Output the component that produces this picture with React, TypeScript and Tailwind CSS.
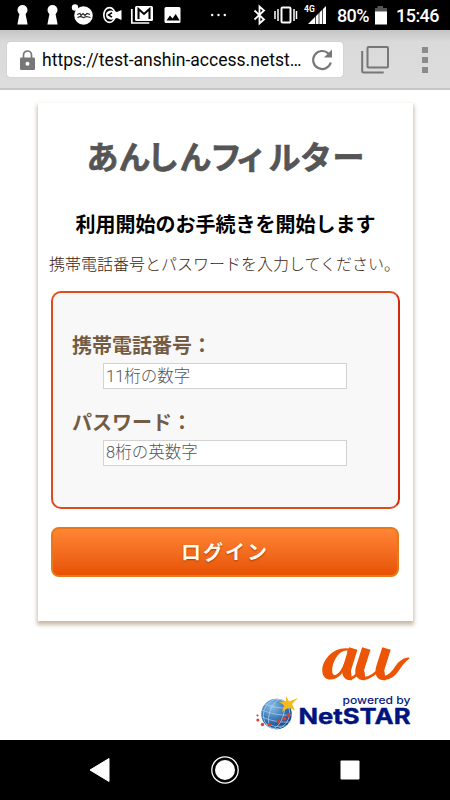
import React from "react";

const jp = "font-['Noto_Sans_CJK_JP',sans-serif]";

function StatusIcons() {
  return (
    <svg width="450" height="30" viewBox="0 0 450 30" fill="#fff">
      <g id="keyhole">
        <circle cx="22.5" cy="10" r="5" />
        <path d="M20 11h5l2.6 13.5H17.4z" />
      </g>
      <use href="#keyhole" x="30" />
      <circle cx="75" cy="7.500" r="3.200" />
      <circle cx="83.500" cy="15.500" r="9.300" />
      <path d="M77 14.500l3-1 1 2 2-2 2 2 2-2 3 1M77.500 17.500l3-1 3 1 3-1 4 1" fill="none" stroke="#222" strokeWidth="1.200" />
      <ellipse cx="109.500" cy="15" rx="5.700" ry="7.400" fill="none" stroke="#fff" strokeWidth="1.600" />
      <path d="M106 15q0-4.500 5.500-4.500l5.500 1.500 4.500-2v10l-4.500-2-5.500 1.700Q106 19.500 106 15z" />
      <path d="M112 12.700l-3.500 2.300 3.500 2.200" fill="none" stroke="#000" strokeWidth="1.500" />
      <path d="M131.800 9v14h17.500" fill="none" stroke="#fff" strokeWidth="1.700" />
      <rect x="135" y="6" width="18" height="15" rx="1.500" />
      <path d="M138.500 19V9l5.500 5 5.500-5v10" fill="none" stroke="#000" strokeWidth="2" />
      <rect x="164.500" y="7" width="16" height="16" rx="1.500" />
      <path d="M166.500 20.500l3.500-5 2.500 3 3.200-4.500 4 6.500z" fill="#000" />
      <circle cx="212.200" cy="15" r="1.200" /><circle cx="218.500" cy="15" r="1.200" /><circle cx="224.800" cy="15" r="1.200" />
      <path d="M254.500 10.500l9.500 9-4.500 4V6.500l4.500 4-9.500 9" fill="none" stroke="#fff" strokeWidth="1.800" />
      <rect x="281.500" y="7.500" width="9" height="15" rx="1" fill="none" stroke="#fff" strokeWidth="2" />
      <path d="M278 9v12M275 11v8M294 9v12M296.500 11v8" stroke="#fff" strokeWidth="1.500" />
      <text x="304" y="11.500" fontFamily="Roboto, sans-serif" fontSize="8.500" fontWeight="700">4G</text>
      <path d="M308 24L326 6v18z" />
      <path d="M315.500 14v10M319 11v13M322.500 8v16" stroke="#000" strokeWidth=".7" />
      <text x="337" y="21.500" fontFamily="Roboto, sans-serif" fontSize="18" fontWeight="500" textLength="32.500">80%</text>
      <path d="M377.500 6h5.500v2h4v4h-12V8h2.500z" fill="#555" />
      <rect x="375" y="11.500" width="12" height="13" />
      <text x="396" y="21.500" fontFamily="Roboto, sans-serif" fontSize="18" fontWeight="500" textLength="43.500">15:46</text>
    </svg>
  );
}

function BrowserBar() {
  return (
    <div className="flex h-[60px] items-start border-b-2 border-[#c6c6c6] bg-gradient-to-b from-[#c4c4c4] via-[#dadada] via-20% to-[#dddddd] pt-[12px] pl-[7px]">
      <div className="flex h-[35px] w-[336px] items-center rounded-[3px] bg-white pl-[12px] shadow-[0_0_1px_#999]">
        <svg width="17" height="22" viewBox="0 0 17 22">
          <path d="M4.500 9V6a4 4 0 018 0v3" fill="none" stroke="#777" strokeWidth="1.700" />
          <rect x="1" y="8.500" width="15" height="12.500" rx="1.200" fill="#777" />
          <circle cx="8.500" cy="14.700" r="2" fill="#fff" />
        </svg>
        <svg className="ml-[6px]" width="262" height="26" viewBox="0 0 262 26">
          <text x="0" y="19" fontFamily="Roboto, sans-serif" fontSize="17.500" textLength="259.500" lengthAdjust="spacingAndGlyphs" fill="#080808">https://test-anshin-access.netst…</text>
        </svg>
        <svg className="ml-[6px]" width="24" height="24" viewBox="0 0 24 24">
          <path d="M20.800 14.500A9 9 0 1118.500 5.600" fill="none" stroke="#777" strokeWidth="2.200" />
          <path d="M22 1.500v8h-8z" fill="#777" />
        </svg>
      </div>
      <svg className="mt-[3px] ml-[17px]" width="30" height="30" viewBox="0 0 30 30" fill="none" stroke="#777" strokeWidth="2">
        <rect x="7.500" y="2" width="20.500" height="20.500" rx="1" />
        <path d="M2.200 6v20a1.500 1.500 0 001.500 1.500h20" />
      </svg>
      <div className="mt-[5px] ml-[32px] flex flex-col gap-[4px]">
        <i className="size-[6px] bg-[#8b8b8b]" />
        <i className="size-[6px] bg-[#8b8b8b]" />
        <i className="size-[6px] bg-[#8b8b8b]" />
      </div>
    </div>
  );
}

function Field({ label, hint }: { label: string; hint: string }) {
  return (
    <label className="block h-[76.500px]">
      <span className="block h-[33px] pl-[19px] text-[20px] leading-[30px] font-bold text-[#735c43]">{label}</span>
      <input
        placeholder={hint}
        className="ml-[50px] block h-[26px] w-[244px] border border-[#d2d2d2] bg-white pl-[2px] font-[Roboto,'Noto_Sans_CJK_JP',sans-serif] text-[16.500px] leading-[22px] placeholder:font-light placeholder:text-[#555]"
      />
    </label>
  );
}

function AuLogo() {
  return (
    <g fill="none" stroke="#eb5505">
      <path fill="#eb5505" stroke="none" fillRule="evenodd" d="M352 649C335 644.500 322 659 322.300 671C322.700 681.500 334 682 341 674.500L346.500 667zM347.500 650.500C338 650 332.500 662 332.200 670.500C332 677 336.800 676 340.500 670.500C344.500 664.500 347 657 347.500 650.500z" />
      <path strokeWidth="8.800" d="M353.300 648.500L347.300 667.500Q344.800 676.500 351.500 675.800M366.300 648.500L360.300 667.500Q357.800 676.500 365 675.800M386.500 648.500L380.500 667.500Q378 676.500 385 675.800" />
      <path strokeWidth="2.800" d="M351 678.500Q357 676.500 361 667M364 678.500Q373 677.500 381 667" />
      <path fill="#eb5505" stroke="none" d="M384 680.200Q393 680 400 669Q404.500 662 409.500 658.500Q409.500 657.200 407.500 657.500Q400 659 395.500 666Q390 675 384 676z" />
    </g>
  );
}

function Brands() {
  return (
    <svg className="mt-[14px] ml-[240px]" width="190" height="105" viewBox="240 635 190 105">
      <defs>
        <radialGradient id="globe" cx=".35" cy=".25" r=".8">
          <stop stopColor="#8dbfe4" />
          <stop offset=".5" stopColor="#427eb9" />
          <stop offset="1" stopColor="#123c80" />
        </radialGradient>
      </defs>
      <AuLogo />
      <circle cx="276.500" cy="714" r="15.300" fill="url(#globe)" />
      <g fill="none" stroke="#a9d3ef" strokeWidth=".7">
        <ellipse cx="276.500" cy="714" rx="7" ry="15" transform="rotate(18 276.500 714)" />
        <ellipse cx="276.500" cy="714" rx="13" ry="15" transform="rotate(18 276.500 714)" />
        <path d="M265 704q11 5 25 4M262 710q13 6 30 5M262 717q13 6 29 5M266 724q10 4 20 2" />
      </g>
      <path d="M286 696l3 5.500 9-3.500-6 6 3 6.500-6.500-3-6.500 4.500 2-6.500-5-4 7 .5z" fill="#f6b91b" />
      <g fill="#df3e2c">
        <circle cx="257.500" cy="715.500" r="1.100" /><circle cx="257.800" cy="720" r="1.500" />
        <circle cx="262.500" cy="724.500" r="1.700" /><circle cx="269.500" cy="724.500" r="1.700" />
        <circle cx="278.500" cy="721" r="1.900" /><circle cx="284.500" cy="718.500" r="1.900" /><circle cx="288.500" cy="715" r="1.900" />
      </g>
      <text x="342.500" y="703.500" fontFamily="Inter, sans-serif" fontSize="10" fontWeight="500" fill="#081b80" textLength="68" lengthAdjust="spacingAndGlyphs">powered by</text>
      <text x="298.500" y="724.300" fontFamily="Inter, sans-serif" fontSize="21.500" fontWeight="700" fill="#00137e" stroke="#00137e" strokeWidth=".4" strokeLinejoin="round" textLength="112" lengthAdjust="spacingAndGlyphs">NetSTAR</text>
    </svg>
  );
}

export default function App() {
  return (
    <div className={`flex h-[800px] w-[450px] flex-col overflow-hidden bg-white ${jp}`}>
      <header className="h-[30px] shrink-0 bg-black"><StatusIcons /></header>
      <BrowserBar />
      <main className="h-[650px] shrink-0 pt-[13px]">
        <section className="ml-[38px] h-[518px] w-[375px] bg-white px-[13px] shadow-[0_3px_4px_1px_#c9bbaa]">
          <svg className="-ml-[13px] block" width="375" height="95" viewBox="38 103 375 95">
            <text y="168.500" x="86.500 118.500 147 179.500 210 235 268.500 300 332.500" fontFamily="'Noto Sans CJK JP', sans-serif" fontWeight="700" fontSize="32" fill="#555" stroke="#555" strokeWidth=".7" strokeLinejoin="round">あんしんフィルター</text>
          </svg>
          <h1 className="-mx-[13px] mt-[10px] h-[32px] text-center text-[20px] leading-[32px] font-bold whitespace-nowrap text-black">利用開始のお手続きを開始します</h1>
          <p className="-ml-[2px] mt-[11px] h-[24px] text-[16px] leading-[24px] font-light whitespace-nowrap text-[#402510]">携帯電話番号とパスワードを入力してください。</p>
          <form onSubmit={(event) => event.preventDefault()}>
            <div className="mt-[16px] h-[218px] w-[349px] rounded-[10px] border-2 border-[#dc4c1c] border-r-[#d5290b] bg-[#f8f8f8] pt-[37px]">
              <Field label="携帯電話番号：" hint="11桁の数字" />
              <Field label="パスワード：" hint="8桁の英数字" />
            </div>
            <button className="mt-[18px] h-[50px] w-[348px] rounded-[8px] border-2 border-[#e5791c] bg-gradient-to-b from-[#ff8534] to-[#e75200] text-[20px] leading-[44px] font-bold tracking-[2px] text-[#fffaf0] [text-shadow:0_1px_2px_#a94000]">ログイン</button>
          </form>
        </section>
        <Brands />
      </main>
      <nav className="flex h-[60px] shrink-0 items-center bg-black">
        <svg width="450" height="60" fill="#fff">
          <path d="M90 30l19-11.500v23z" stroke="#fff" strokeLinejoin="round" />
          <circle cx="225" cy="30" r="10" />
          <circle cx="225" cy="30" r="13.200" fill="none" stroke="#fff" strokeWidth="1.300" />
          <rect x="340.500" y="20.500" width="19" height="19" rx="1" />
        </svg>
      </nav>
    </div>
  );
}
